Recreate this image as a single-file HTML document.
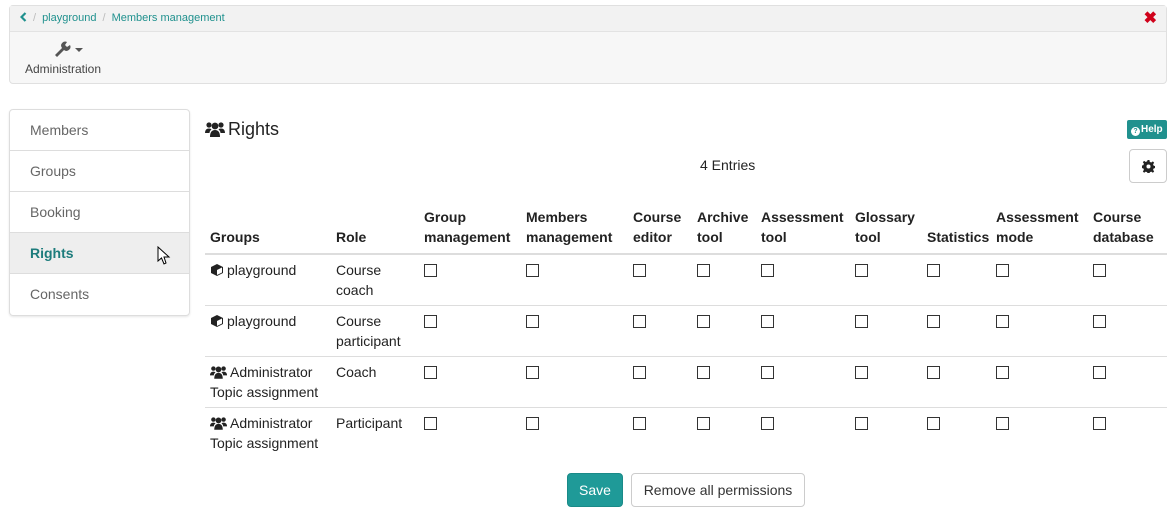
<!DOCTYPE html>
<html><head><meta charset="utf-8"><style>
*{box-sizing:border-box}
body{margin:0;width:1172px;height:520px;background:#fff;font-family:"Liberation Sans",sans-serif;color:#222;font-size:14px;position:relative;overflow:hidden}
.top{position:absolute;left:9px;top:5px;width:1158px;height:79px;border:1px solid #e0e0e0;border-radius:4px;background:#f7f7f7}
.crumb{height:26px;border-bottom:1px solid #e3e3e3;background:#f2f2f2;font-size:11px;line-height:25px;padding-left:10px;color:#20918e}
.crumb .s{color:#bbb;margin:0 6px}
.x{position:absolute;right:9px;top:2px;color:#d0021b;font-size:16px;font-weight:bold}
.admin{position:absolute;left:15px;top:56px;font-size:12px;color:#444}
.side{position:absolute;left:9px;top:109px;width:181px;border:1px solid #ddd;border-radius:4px;box-shadow:0 1px 2px rgba(0,0,0,.1)}
.side div{height:41px;line-height:40px;padding-left:20px;color:#666;border-bottom:1px solid #ddd}
.side div:last-child{border-bottom:none}
.side .a{background:#eee;color:#1d7c7c;font-weight:bold}
h2{position:absolute;left:205px;top:119px;margin:0;font-size:18px;font-weight:normal;color:#222}
.help{position:absolute;left:1127px;top:120px;width:40px;height:19px;background:#20918e;color:#fff;font-size:10px;font-weight:bold;border-radius:2px;padding:4px 0 0 4px;line-height:11px}
.help i{display:inline-block;width:9px;height:9px;border-radius:50%;background:#fff;color:#20918e;font-size:7px;line-height:9px;text-align:center;font-style:normal;vertical-align:-1px;margin-right:1px}
.gear{position:absolute;left:1129px;top:149px;width:38px;height:34px;border:1px solid #ccc;border-radius:4px}
.entries{position:absolute;left:700px;top:157px;font-size:14px}
table{position:absolute;left:205px;top:207px;border-collapse:collapse;table-layout:fixed;width:962px}
th{text-align:left;vertical-align:bottom;font-weight:bold;padding:0 5px 6px;line-height:20px;border-bottom:2px solid #ddd;height:46px}
td{vertical-align:top;padding:5px 5px 5px;line-height:20px;height:50px;border-bottom:1px solid #ddd}
tr:last-child td{border-bottom:none}
.cb{display:inline-block;width:13px;height:13px;border:1px solid #333;margin-top:4px;background:#fff}
.btn{position:absolute;top:473px;height:34px;border-radius:4px;line-height:32px;font-size:14px;text-align:center}
svg.i{vertical-align:-2px;margin-right:3px}
</style></head><body>
<div class="top">
<div class="crumb"><svg width="7" height="10" viewBox="0 0 7 10" style="vertical-align:-1px"><path d="M5.5 1 L1.5 5 L5.5 9" stroke="#20918e" stroke-width="2.2" fill="none"/></svg><span class="s">/</span>playground<span class="s">/</span>Members management</div>
<div class="x">✖</div>
<svg style="position:absolute;left:43px;top:35px" width="32" height="16" viewBox="0 0 32 16"><path d="M2 14 L9 7 A4 4 0 0 1 14 1 L12 4 L14 6 L17 4 A4 4 0 0 1 11 9 L4 16 Z" fill="#555"/><path d="M22 7 L30 7 L26 11 Z" fill="#555"/></svg>
<div class="admin">Administration</div>
</div>
<div class="side"><div>Members</div><div>Groups</div><div>Booking</div><div class="a">Rights</div><div>Consents</div></div>
<svg style="position:absolute;left:157px;top:246px" width="14" height="20" viewBox="0 0 14 20"><path d="M1 1 L1 15 L4.5 12 L7 18 L9 17 L7 11 L12 11 Z" fill="#fff" stroke="#000"/></svg>
<h2><svg class="i" width="20" height="16" viewBox="0 0 20 16"><circle cx="4" cy="4" r="2.6" fill="#222"/><circle cx="16" cy="4" r="2.6" fill="#222"/><circle cx="10" cy="5" r="3.4" fill="#222"/><path d="M0 12 Q0 7.5 4 7.5 Q6 7.5 6.5 8.5 Q4.5 10 4.5 12Z M20 12 Q20 7.5 16 7.5 Q14 7.5 13.5 8.5 Q15.5 10 15.5 12Z M5 16 Q5 9 10 9 Q15 9 15 16Z" fill="#222"/></svg>Rights</h2>
<div class="help"><i>?</i>Help</div>
<div class="gear"><svg style="position:absolute;left:12px;top:10px" width="13" height="13" viewBox="0 0 14 14"><path d="M6 0h2l.4 2 1.6.7 1.7-1.2 1.4 1.4-1.2 1.7.7 1.6 2 .4v2l-2 .4-.7 1.6 1.2 1.7-1.4 1.4-1.7-1.2-1.6.7-.4 2H6l-.4-2-1.6-.7-1.7 1.2-1.4-1.4 1.2-1.7-.7-1.6-2-.4V6l2-.4.7-1.6-1.2-1.7 1.4-1.4 1.7 1.2 1.6-.7z" fill="#222"/><circle cx="7" cy="7" r="2.2" fill="#fff"/></svg></div>
<div class="entries">4 Entries</div>
<table>
<colgroup><col style="width:126px"><col style="width:88px"><col style="width:102px"><col style="width:107px"><col style="width:64px"><col style="width:64px"><col style="width:94px"><col style="width:72px"><col style="width:69px"><col style="width:97px"><col style="width:79px"></colgroup>
<tr><th>Groups</th><th>Role</th><th>Group management</th><th>Members management</th><th>Course editor</th><th>Archive tool</th><th>Assessment tool</th><th>Glossary tool</th><th>Statistics</th><th>Assessment mode</th><th>Course database</th></tr>
<tr><td><svg class="i" width="14" height="14" viewBox="0 0 14 14"><path d="M7 1 L13 4 L13 10 L7 13 L1 10 L1 4 Z" fill="#222"/><path d="M7 7 L12 4.5 L12 9.5 L7 12 Z" fill="#fff"/></svg>playground</td><td>Course coach</td><td><i class="cb"></i></td><td><i class="cb"></i></td><td><i class="cb"></i></td><td><i class="cb"></i></td><td><i class="cb"></i></td><td><i class="cb"></i></td><td><i class="cb"></i></td><td><i class="cb"></i></td><td><i class="cb"></i></td></tr>
<tr><td><svg class="i" width="14" height="14" viewBox="0 0 14 14"><path d="M7 1 L13 4 L13 10 L7 13 L1 10 L1 4 Z" fill="#222"/><path d="M7 7 L12 4.5 L12 9.5 L7 12 Z" fill="#fff"/></svg>playground</td><td>Course participant</td><td><i class="cb"></i></td><td><i class="cb"></i></td><td><i class="cb"></i></td><td><i class="cb"></i></td><td><i class="cb"></i></td><td><i class="cb"></i></td><td><i class="cb"></i></td><td><i class="cb"></i></td><td><i class="cb"></i></td></tr>
<tr><td><svg class="i" width="17" height="14" viewBox="0 0 20 16"><circle cx="4" cy="4" r="2.6" fill="#222"/><circle cx="16" cy="4" r="2.6" fill="#222"/><circle cx="10" cy="5" r="3.4" fill="#222"/><path d="M0 12 Q0 7.5 4 7.5 Q6 7.5 6.5 8.5 Q4.5 10 4.5 12Z M20 12 Q20 7.5 16 7.5 Q14 7.5 13.5 8.5 Q15.5 10 15.5 12Z M5 16 Q5 9 10 9 Q15 9 15 16Z" fill="#222"/></svg>Administrator Topic assignment</td><td>Coach</td><td><i class="cb"></i></td><td><i class="cb"></i></td><td><i class="cb"></i></td><td><i class="cb"></i></td><td><i class="cb"></i></td><td><i class="cb"></i></td><td><i class="cb"></i></td><td><i class="cb"></i></td><td><i class="cb"></i></td></tr>
<tr><td><svg class="i" width="17" height="14" viewBox="0 0 20 16"><circle cx="4" cy="4" r="2.6" fill="#222"/><circle cx="16" cy="4" r="2.6" fill="#222"/><circle cx="10" cy="5" r="3.4" fill="#222"/><path d="M0 12 Q0 7.5 4 7.5 Q6 7.5 6.5 8.5 Q4.5 10 4.5 12Z M20 12 Q20 7.5 16 7.5 Q14 7.5 13.5 8.5 Q15.5 10 15.5 12Z M5 16 Q5 9 10 9 Q15 9 15 16Z" fill="#222"/></svg>Administrator Topic assignment</td><td>Participant</td><td><i class="cb"></i></td><td><i class="cb"></i></td><td><i class="cb"></i></td><td><i class="cb"></i></td><td><i class="cb"></i></td><td><i class="cb"></i></td><td><i class="cb"></i></td><td><i class="cb"></i></td><td><i class="cb"></i></td></tr>
</table>
<div class="btn" style="left:567px;width:56px;background:#1f9a98;color:#fff;border:1px solid #1a8a88">Save</div>
<div class="btn" style="left:631px;width:174px;background:#fff;border:1px solid #ccc;color:#333">Remove all permissions</div>
</body></html>
